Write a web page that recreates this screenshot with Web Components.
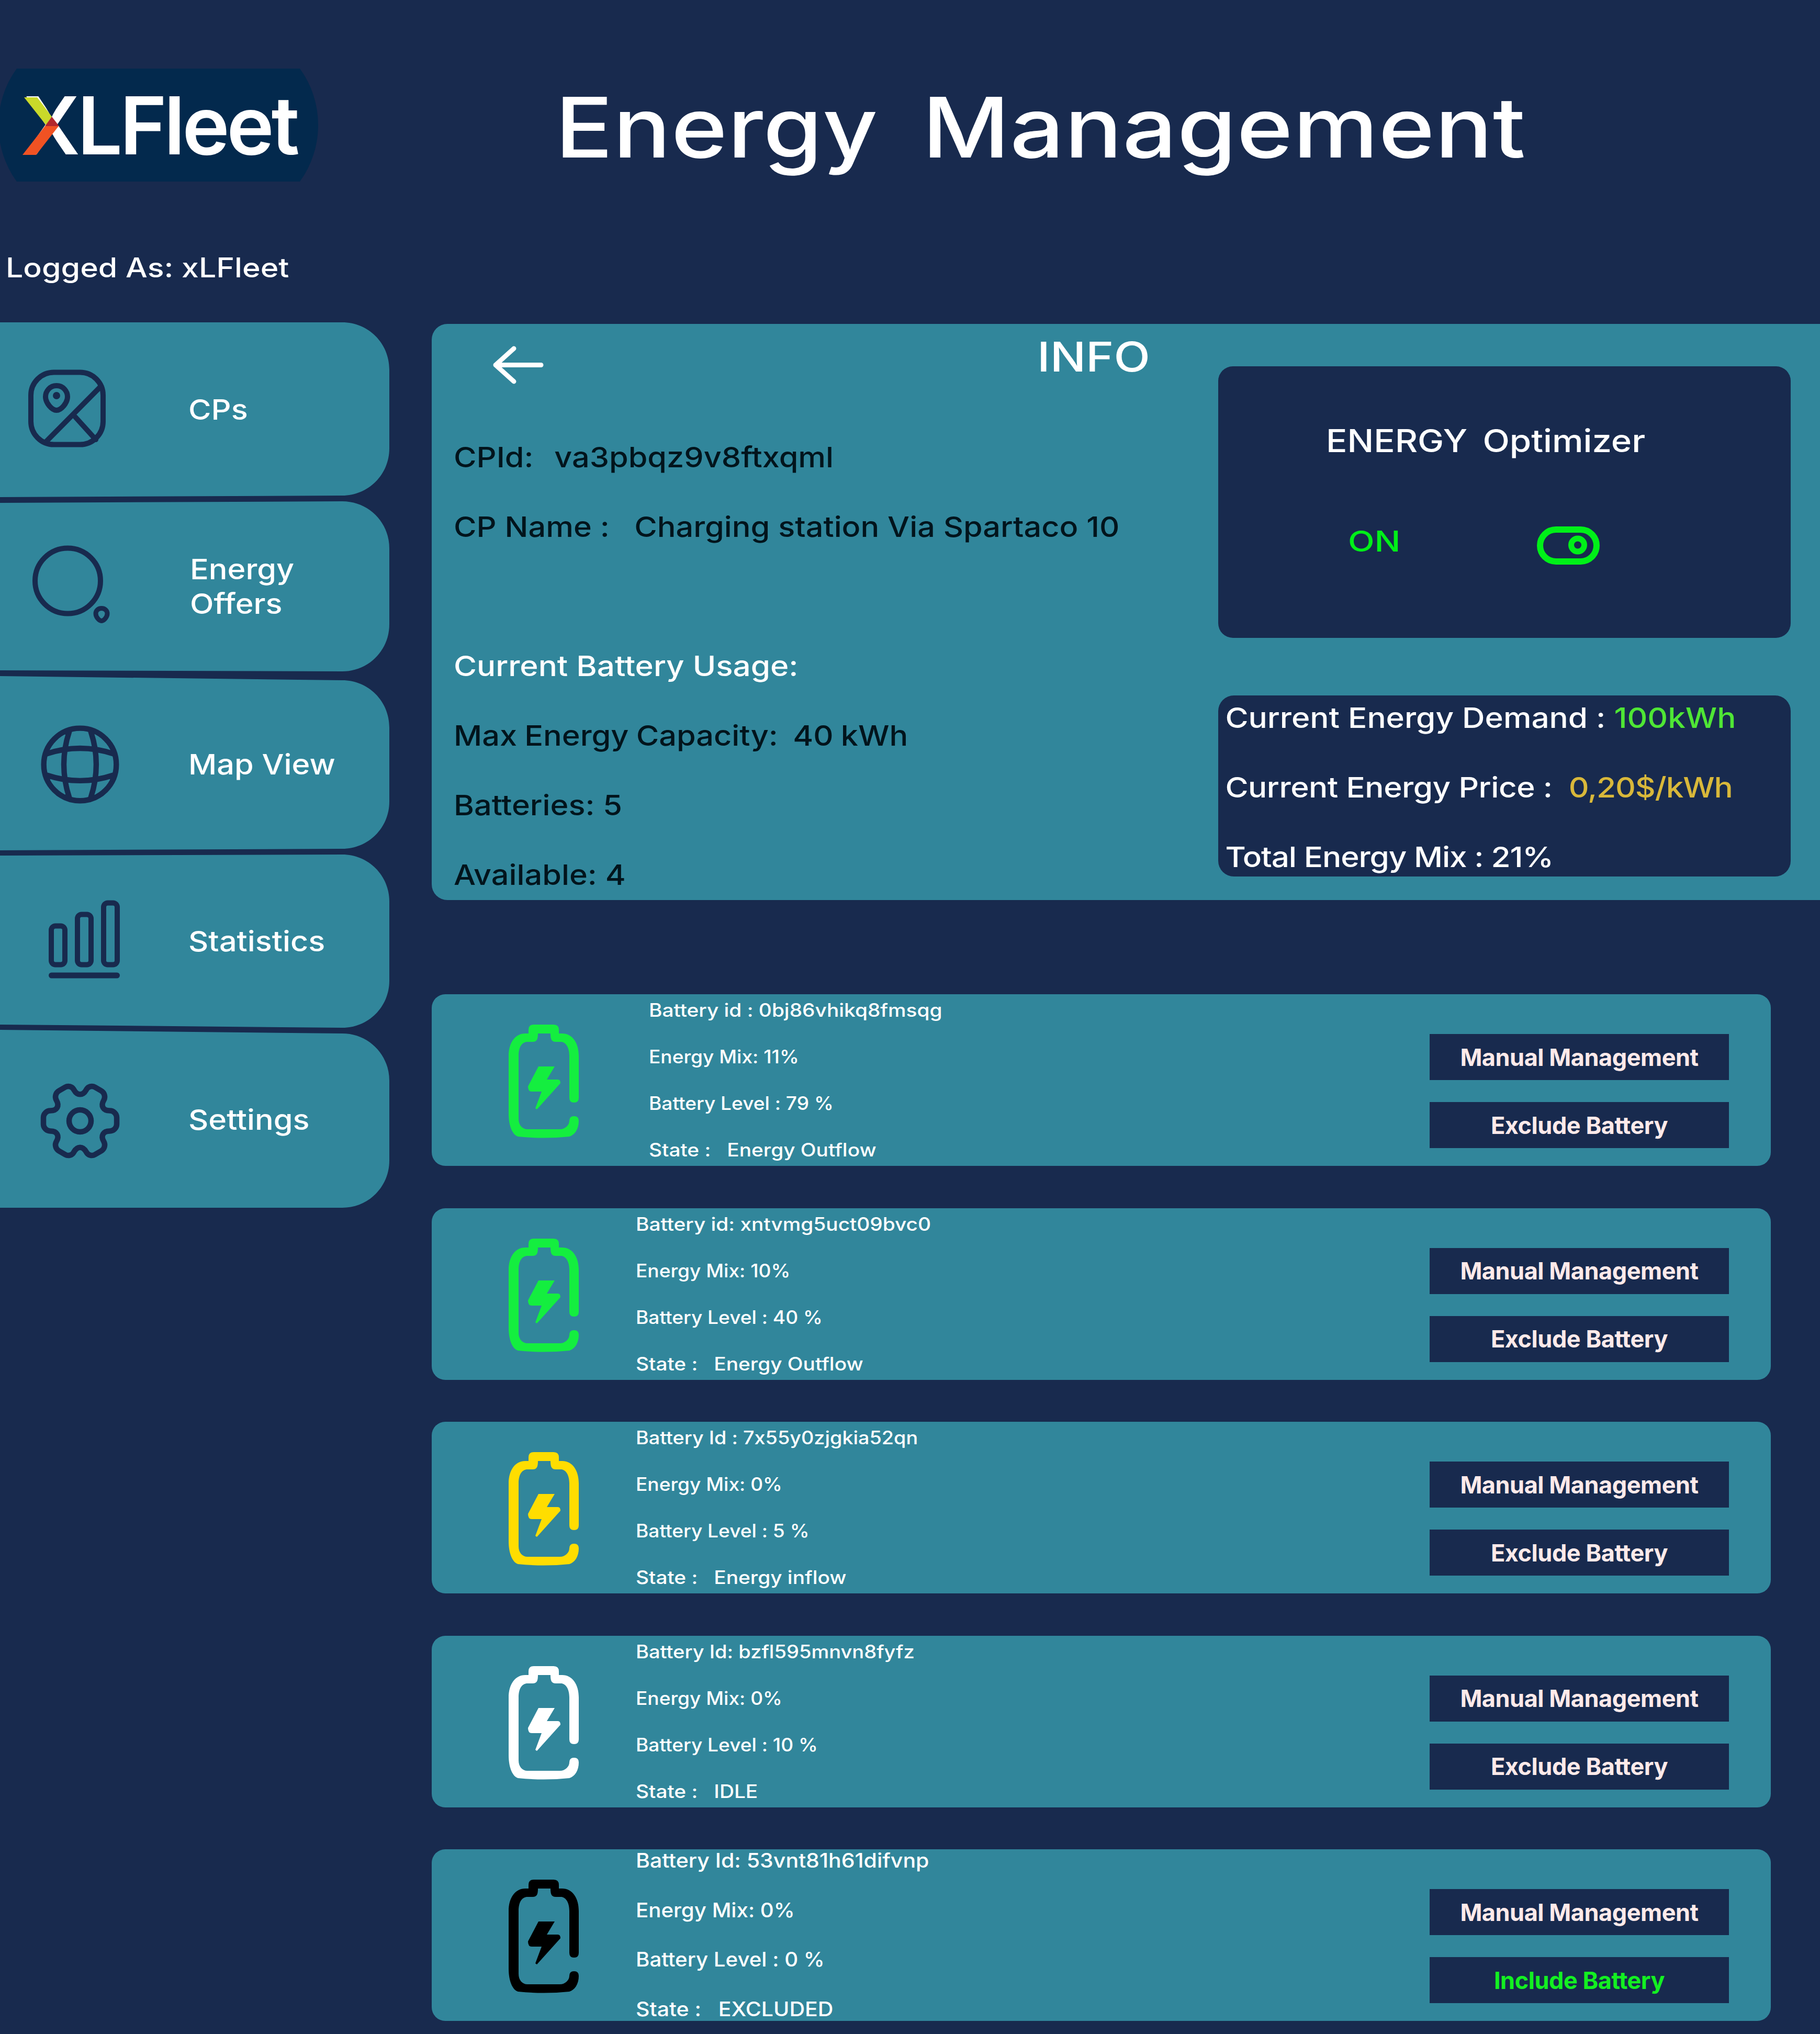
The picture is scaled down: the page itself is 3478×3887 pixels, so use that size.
<!doctype html>
<html lang="en">
<head>
<meta charset="utf-8">
<title>Energy Management</title>
<style>
  html, body { margin: 0; background: #182a4e; }
  body { font-family: Inter, "Liberation Sans", sans-serif; font-weight: 550; font-variant-ligatures: no-contextual; color: #fff; }
  .narrow3 { transform: scaleX(.973); transform-origin: 0 50%; }
  .narrow4 { transform: scaleX(.98); transform-origin: 0 50%; }
</style>
</head>
<body>
<app-page>
  <xl-logo slot="logo"></xl-logo>
  <span slot="title">Energy  Management</span>
  <span slot="user">Logged As: xLFleet</span>

  <side-nav slot="nav">
    <nav-item h="334" tl="0" tr="0" bl="334" br="331">
      <svg slot="icon" viewBox="0 693 362 180" width="362" height="180" fill="none" stroke="#182a4e" stroke-width="10" stroke-linecap="round" stroke-linejoin="round">
        <rect x="59" y="711.5" width="138" height="138" rx="44"/>
        <path d="M108 737C121 737 129 748 129 758C129 770 117 784 108 784C99 784 87 770 87 758C87 748 95 737 108 737Z"/>
        <circle cx="108" cy="756" r="7" fill="#182a4e" stroke="none"/>
        <path d="M191 740L89 843M144 797L183 840"/>
      </svg>
      CPs
    </nav-item>
    <nav-item h="325" tl="3" tr="0" bl="323" br="325" style="margin-top:8px" indent="3">
      <svg slot="icon" viewBox="0 1030.5 362 180" width="362" height="180" fill="none" stroke="#182a4e" stroke-width="10" stroke-linecap="round" stroke-linejoin="round">
        <circle cx="129.500" cy="1109.500" r="62.500"/>
        <path stroke-width="9" d="M194 1162C201 1162 205 1167 205 1172C205 1178 199 1186 194 1186C189 1186 183 1178 183 1172C183 1167 187 1162 194 1162Z"/>
      </svg>
      Energy<br>Offers
    </nav-item>
    <nav-item h="333" tl="0" tr="8" bl="333" br="330" style="margin-top:9px" dy="4">
      <svg slot="icon" viewBox="0 1368.5 362 180" width="362" height="180" fill="none" stroke="#182a4e" stroke-linecap="round" stroke-linejoin="round">
        <g transform="translate(69.800 1377.300) scale(6.930)" stroke-width="1.500">
          <path d="M12 22c5.523 0 10-4.477 10-10S17.523 2 12 2 2 6.477 2 12s4.477 10 10 10Z"/>
          <path d="M8 3h1a28.424 28.424 0 0 0 0 18H8M15 3a28.424 28.424 0 0 1 0 18M3 16v-1a28.424 28.424 0 0 0 18 0v1M3 9a28.424 28.424 0 0 1 18 0"/>
        </g>
      </svg>
      Map View
    </nav-item>
    <nav-item h="331" tl="2" tr="0" bl="325" br="331" style="margin-top:8px">
      <svg slot="icon" viewBox="0 1708.5 362 180" width="362" height="180" fill="none" stroke="#182a4e" stroke-width="10" stroke-linecap="round" stroke-linejoin="round">
        <rect x="98" y="1769" width="26" height="74" rx="8"/>
        <rect x="148" y="1747" width="26" height="96" rx="8"/>
        <rect x="198" y="1725" width="26" height="118" rx="8"/>
        <path stroke-width="11" d="M98.500 1863.500H223.500"/>
      </svg>
      Statistics
    </nav-item>
    <nav-item h="340" tl="0" tr="7" bl="340" br="340" style="margin-top:4px" dy="4">
      <svg slot="icon" viewBox="0 2048 362 180" width="362" height="180" fill="none" stroke="#182a4e" stroke-linecap="round" stroke-linejoin="round">
        <g transform="translate(69 2058) scale(7)" stroke-width="1.500">
          <path d="M12 15a3 3 0 1 0 0-6 3 3 0 0 0 0 6Z"/>
          <path d="M2 12.880v-1.760c0-1.040.85-1.900 1.900-1.900 1.810 0 2.550-1.280 1.640-2.850-.52-.9-.21-2.070.7-2.590l1.730-.99c.79-.47 1.810-.19 2.280.6l.11.19c.9 1.570 2.380 1.570 3.290 0l.11-.19c.47-.79 1.490-1.070 2.280-.6l1.730.99c.91.52 1.220 1.690.7 2.590-.91 1.570-.17 2.850 1.640 2.850 1.040 0 1.900.85 1.900 1.900v1.760c0 1.040-.85 1.900-1.900 1.900-1.810 0-2.550 1.280-1.640 2.850.52.91.21 2.070-.7 2.590l-1.730.99c-.79.47-1.810.19-2.280-.6l-.11-.19c-.9-1.570-2.380-1.570-3.290 0l-.11.19c-.47.79-1.490 1.070-2.280.6l-1.730-.99a1.899 1.899 0 0 1-.7-2.590c.91-1.570.17-2.850-1.640-2.850-1.050 0-1.900-.86-1.900-1.900Z"/>
        </g>
      </svg>
      Settings
    </nav-item>
  </side-nav>

  <info-panel slot="info">
    <span style="word-spacing:-2.400px">CPId:   va3pbqz9v8ftxqml</span>
    <span>CP Name :   Charging station Via Spartaco 10</span>
    <span class="white">Current Battery Usage:</span>
    <span style="word-spacing:-1.500px">Max Energy Capacity:  40 kWh</span>
    <span>Batteries: 5</span>
    <span>Available: 4</span>
    <optimizer-card slot="side"></optimizer-card>
    <stats-card slot="side">
      <span>Current Energy Demand : <span style="color:#4fe635">100kWh</span></span>
      <span style="letter-spacing:-.4px">Current Energy Price :  <span style="color:#d9b83a;letter-spacing:-1px">0,20$/kWh</span></span>
      <span style="letter-spacing:-1px">Total Energy Mix : 21%</span>
    </stats-card>
  </info-panel>

  <battery-card slot="cards" color="#14ee3f" indent="415">
    <span>Battery id : 0bj86vhikq8fmsqg</span>
    <span>Energy Mix: 11%</span>
    <span>Battery Level : 79 %</span>
    <span>State :   Energy Outflow</span>
  </battery-card>
  <battery-card slot="cards" color="#14ee3f">
    <span>Battery id: xntvmg5uct09bvc0</span>
    <span>Energy Mix: 10%</span>
    <span>Battery Level : 40 %</span>
    <span>State :   Energy Outflow</span>
  </battery-card>
  <battery-card slot="cards" color="#ffdd00">
    <span class="narrow3">Battery Id : 7x55y0zjgkia52qn</span>
    <span>Energy Mix: 0%</span>
    <span>Battery Level : 5 %</span>
    <span>State :   Energy inflow</span>
  </battery-card>
  <battery-card slot="cards" color="#ffffff">
    <span class="narrow4">Battery Id: bzfl595mnvn8fyfz</span>
    <span>Energy Mix: 0%</span>
    <span>Battery Level : 10 %</span>
    <span>State :   IDLE</span>
  </battery-card>
  <battery-card slot="cards" color="#000000" excluded>
    <span>Battery Id: 53vnt81h61difvnp</span>
    <span>Energy Mix: 0%</span>
    <span>Battery Level : 0 %</span>
    <span>State :   EXCLUDED</span>
  </battery-card>
</app-page>

<script>
// Inter is narrower than the face of the mock-up, so the text blocks get stretched with scaleX
class AppPage extends HTMLElement {
  constructor() {
    super();
    this.attachShadow({ mode: 'open' }).innerHTML = /*html*/ `
      <style>
        :host { display: block; width: 3478px; height: 3887px; overflow: hidden; }
        header { display: flex; align-items: flex-start; height: 216px; padding-top: 131px; }
        .title { margin: 9px 0 0 453px; font-size: 160px; line-height: 207px; white-space: pre; letter-spacing: .4px; word-spacing: -6px; transform: scaleX(1.144); transform-origin: 0 50%; }
        .user { margin: 130px 0 0 11px; font-size: 52px; line-height: 70px; transform: scaleX(1.135); transform-origin: 0 50%; }
        main { display: flex; margin-top: 69px; }
        .nav { flex: none; width: 744px; }
        .content { flex: 1; margin-left: 81px; padding-top: 3px; min-width: 0; }
        .cards { display: flex; flex-direction: column; gap: 80.5px; margin-top: 180px; }
      </style>
      <header><slot name="logo"></slot><div class="title"><slot name="title"></slot></div></header>
      <div class="user"><slot name="user"></slot></div>
      <main>
        <div class="nav"><slot name="nav"></slot></div>
        <div class="content">
          <slot name="info"></slot>
          <div class="cards"><slot name="cards"></slot></div>
        </div>
      </main>`;
  }
}

class XlLogo extends HTMLElement {
  constructor() {
    super();
    this.attachShadow({ mode: 'open' }).innerHTML = /*html*/ `
      <style>
        :host { display: block; position: relative; flex: none; width: 608px; height: 216px; }
        .shape { height: 216px; padding: 1px 0 0 43px; box-sizing: border-box; background: #03294d;
          clip-path: path('M32 0H573A184 184 0 0 1 573 216H32A184 184 0 0 1 32 0Z');
          font-size: 153px; font-weight: 600; line-height: 216px; letter-spacing: -.035em; white-space: nowrap; }
        svg { position: absolute; left: 0; top: 0; }
      </style>
      <div class="shape">XLFleet</div>
      <svg width="608" height="216" viewBox="0 0 608 216">
        <path fill="#c9d92a" d="M46 55H71L99 92L88 108Z"/>
        <path fill="#b3282d" d="M99 92L113 110H86Z"/>
        <path fill="#f15223" d="M86 110H112L69 165H43Z"/>
      </svg>`;
  }
}

class SideNav extends HTMLElement {
  constructor() {
    super();
    this.attachShadow({ mode: 'open' }).innerHTML = `
      <style>:host { display: flex; flex-direction: column; }</style>
      <slot></slot>`;
  }
}

class NavItem extends HTMLElement {
  constructor() {
    super();
    this.shadow = this.attachShadow({ mode: 'open' });
  }

  connectedCallback() {
    const h = +this.getAttribute('h');
    const tl = +this.getAttribute('tl'), tr = +this.getAttribute('tr');
    const bl = +this.getAttribute('bl'), br = +this.getAttribute('br');
    // the buttons of the mock-up are hand drawn, their long edges are not quite level
    const clip = `M0 ${tl}L654 ${tr}C704 ${tr} 744 ${tr + 40} 744 ${tr + 90}V${br - 90}C744 ${br - 40} 704 ${br} 654 ${br}L0 ${bl}Z`;
    this.shadow.innerHTML = /*html*/ `
      <style>
        :host { display: flex; align-items: center; width: 744px; height: ${h}px; background: #31869b;
          clip-path: path('${clip}'); font-size: 54px; line-height: 66px; }
        .icon { flex: none; width: 362px; height: 180px; }
        .label { margin: ${this.getAttribute('dy') || 0}px 0 0 ${(+this.getAttribute('indent') || 0) - 2}px; transform: scaleX(1.1); transform-origin: 0 50%; }
      </style>
      <div class="icon"><slot name="icon"></slot></div>
      <div class="label"><slot></slot></div>`;
  }
}

class InfoPanel extends HTMLElement {
  constructor() {
    super();
    this.attachShadow({ mode: 'open' }).innerHTML = /*html*/ `
      <style>
        :host { display: flex; height: 1101px; background: #31869b; border-radius: 30px 0 0 30px; }
        .left { flex: none; width: 1461px; padding-left: 42px; }
        .top { display: flex; height: 100px; padding-top: 13px; }
        .top svg { flex: none; margin: 25px 0 0 70px; }
        .top h2 { margin: 0 0 0 938px; font-size: 78px; line-height: 100px; font-weight: 500; color: #fff; transform: scaleX(1.16); transform-origin: 0 50%; }
        .rows { display: flex; flex-direction: column; margin-top: 75px; font-size: 54px; line-height: 133px; white-space: pre; color: #02141c;
          transform: scaleX(1.1); transform-origin: 0 50%; }
        ::slotted(.white) { color: #fff; margin-top: 133px; transform: scaleX(1.012); transform-origin: 0 50%; }
        .right { display: flex; flex-direction: column; gap: 110px; width: 1094px; padding-top: 81px; }
      </style>
      <div class="left">
        <div class="top">
          <svg width="107" height="81" viewBox="937 660 107 81" fill="none" stroke="#fff" stroke-width="9" stroke-linecap="round" stroke-linejoin="round">
            <path d="M947 700.500H1034M982 669L947 700.500L982 732"/>
          </svg>
          <h2>INFO</h2>
        </div>
        <div class="rows"><slot></slot></div>
      </div>
      <div class="right"><slot name="side"></slot></div>`;
  }
}

class OptimizerCard extends HTMLElement {
  constructor() {
    super();
    this.attachShadow({ mode: 'open' }).innerHTML = /*html*/ `
      <style>
        :host { display: block; height: 519px; padding-top: 102px; box-sizing: border-box; background: #182a4e; border-radius: 28px; color: #fff; }
        .name { margin-left: 206px; font-size: 60px; line-height: 80px; white-space: pre; word-spacing: -3px; transform: scaleX(1.118); transform-origin: 0 50%; }
        .row { display: flex; margin: 112px 0 0 248px; font-size: 55px; line-height: 80px; color: #00f018; }
        .state { width: 361px; transform: scaleX(1.2); transform-origin: 0 50%; }
        svg { flex: none; margin-top: 12px; }
      </style>
      <div class="name">ENERGY  Optimizer</div>
      <div class="row">
        <div class="state">ON</div>
        <svg width="120" height="73" viewBox="0 0 120 73" fill="none" stroke="#00f018" stroke-width="12">
          <rect x="6" y="6" width="108" height="61" rx="30.500"/>
          <circle cx="78" cy="35.500" r="12.500" stroke-width="11"/>
        </svg>
      </div>`;
  }
}

class StatsCard extends HTMLElement {
  constructor() {
    super();
    this.attachShadow({ mode: 'open' }).innerHTML = /*html*/ `
      <style>
        :host { display: block; height: 346px; background: #182a4e; border-radius: 30px; color: #fff; }
        .lines { display: flex; flex-direction: column; gap: 87px; padding: 20px 0 0 12px; font-size: 54px; line-height: 46px; white-space: pre;
          transform: scaleX(1.115); transform-origin: 0 50%; }
      </style>
      <div class="lines"><slot></slot></div>`;
  }
}

class BatteryCard extends HTMLElement {
  constructor() {
    super();
    this.shadow = this.attachShadow({ mode: 'open' });
  }

  connectedCallback() {
    const excluded = this.hasAttribute('excluded');
    const indent = this.getAttribute('indent') || 390;
    this.shadow.innerHTML = /*html*/ `
      <style>
        :host { display: flex; width: 2559px; height: 328px; position: relative; background: #31869b; border-radius: 26px; color: #fff; }
        .icon { position: absolute; left: 147px; top: 58px; }
        .lines { display: flex; flex-direction: column; margin-left: ${indent}px; white-space: pre;
          padding-top: ${excluded ? 2 : 12}px; gap: ${excluded ? 56.7 : 53}px;
          font-size: ${excluded ? 38 : 35}px; line-height: ${excluded ? 38 : 36}px;
          transform: scaleX(${excluded ? 1.08 : 1.109}); transform-origin: 0 50%; }
        ::slotted(span:nth-child(2)), ::slotted(span:nth-child(3)) { transform: scaleX(${excluded ? .98 : .955}); transform-origin: 0 50%; }
        .actions { display: flex; flex-direction: column; gap: 42px; margin: 76px 80px 0 auto; }
      </style>
      <svg class="icon" width="134" height="217" viewBox="0 0 134 217" fill="${this.getAttribute('color')}">
        <path d="M38 10Q38 0 48 0H86Q96 0 96 10V17H102C122 17 134 35 134 60V140Q134 149 125 149Q116 149 116 140V60C116 42 108 33 100 33H90C82 33 80 28 80 17H56C56 28 54 33 46 33H36C26 33 19 42 19 60V180C19 192 26 200 36 200H98C108 200 116 192 116 184Q116 175 125 175Q134 175 134 184C134 200 126 211 116 214Q67 219 18 214C8 211 0 195 0 170V60C0 35 12 17 32 17H38Z"/>
        <path d="M57 80H88L73 105H94Q99 105 99 112L54 162L51 160L63 128H44Q37 128 37 118Z"/>
      </svg>
      <div class="lines"><slot></slot></div>
      <div class="actions">
        <action-button>Manual Management</action-button>
        <action-button ${excluded ? 'include' : ''}>${excluded ? 'Include Battery' : 'Exclude Battery'}</action-button>
      </div>`;
  }
}

class ActionButton extends HTMLElement {
  constructor() {
    super();
    this.shadow = this.attachShadow({ mode: 'open' });
  }

  connectedCallback() {
    this.shadow.innerHTML = /*html*/ `
      <style>
        :host { display: flex; align-items: center; justify-content: center; width: 572px; height: 88px; background: #182a4e;
          font-size: 45px; font-weight: 700; letter-spacing: -.01em;
          color: ${this.hasAttribute('include') ? '#13f021' : '#ffeaea'}; }
      </style>
      <slot></slot>`;
  }
}

customElements.define('app-page', AppPage);
customElements.define('xl-logo', XlLogo);
customElements.define('side-nav', SideNav);
customElements.define('nav-item', NavItem);
customElements.define('info-panel', InfoPanel);
customElements.define('optimizer-card', OptimizerCard);
customElements.define('stats-card', StatsCard);
customElements.define('battery-card', BatteryCard);
customElements.define('action-button', ActionButton);
</script>
</body>
</html>
